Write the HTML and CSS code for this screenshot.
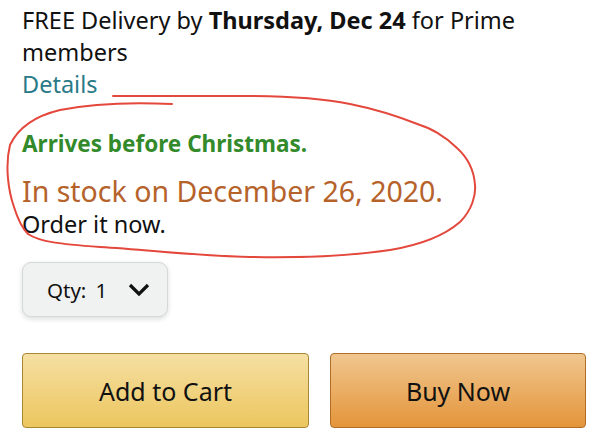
FILE: index.html
```html
<!DOCTYPE html>
<html lang="en">
<head>
  <meta charset="UTF-8">
  <title>Buy Box</title>
  <link rel="stylesheet" href="styles.css">
</head>
<body>
  <div class="buybox">
    <p class="delivery">FREE Delivery by <b>Thursday, Dec 24</b> for Prime<br>members</p>
    <a class="details" href="#">Details</a>

    <p class="arrives">Arrives before Christmas.</p>
    <p class="stock">In stock on December 26, 2020.</p>
    <p class="order">Order it now.</p>

    <div class="qty">
      <span>Qty:</span>
      <span class="qty-value">1</span>
      <svg class="chevron" width="22" height="14" viewBox="0 0 22 14">
        <polyline points="2,2 11,11 20,2" fill="none" stroke="#111" stroke-width="3.2"/>
      </svg>
    </div>

    <div class="actions">
      <button class="btn cart">Add to Cart</button>
      <button class="btn buy">Buy Now</button>
    </div>

    <!-- hand drawn marker circle -->
    <svg class="scribble" width="610" height="447" viewBox="0 0 610 447">
      <path d="M172 104 C 130 102 90 104 60 110 C 35 116 18 128 10 145 C 5 165 8 190 14 207 C 18 220 22 228 28 234 C 40 242 60 244 100 247 C 150 250 200 256 250 257 C 300 258 350 256 390 250 C 420 245 445 235 460 222 C 472 210 476 195 475 185 C 474 170 468 158 457 148 C 445 136 430 128 420 125 C 400 117 380 110 350 104 C 320 98 290 96 240 96 L 113 96"
        fill="none" stroke="#e4473b" stroke-width="2" stroke-linecap="round"/>
    </svg>
  </div>
</body>
</html>
```

FILE: styles.css
```css
body {
  margin: 0;
  background: #ffffff;
  font-family: "Noto Sans", Arial, sans-serif;
  color: #111111;
}

.buybox {
  position: relative;
  padding: 4px 24px 20px 22px;
}

p {
  margin: 0;
}

.delivery {
  font-size: 23.5px;
  line-height: 32px;
}

.details {
  display: block;
  font-size: 23.5px;
  line-height: 32px;
  color: #2a7a88;
  text-decoration: none;
}

.arrives {
  margin-top: 30px;
  font-size: 22.5px;
  line-height: 28px;
  font-weight: bold;
  color: #338a2a;
}

.stock {
  margin-top: 16px;
  font-size: 28.5px;
  line-height: 34px;
  color: #b5622b;
}

.order {
  margin-top: 1px;
  font-size: 23.5px;
  line-height: 30px;
}

.qty {
  margin-top: 23px;
  width: 146px;
  height: 55px;
  box-sizing: border-box;
  display: flex;
  align-items: center;
  gap: 9px;
  padding-left: 24px;
  font-size: 20.5px;
  background: #f0f2f2;
  border: 1px solid #d5d9d9;
  border-radius: 9px;
  box-shadow: 0 2px 5px rgba(15, 17, 17, 0.15);
}

.qty .chevron {
  margin-left: 12px;
}

.actions {
  margin-top: 36px;
  display: grid;
  grid-template-columns: 287px 1fr;
  gap: 21px;
}

.btn {
  height: 75px;
  font-family: "Noto Sans", Arial, sans-serif;
  font-size: 25px;
  color: #111111;
  border-radius: 4px;
  cursor: pointer;
}

.cart {
  background: linear-gradient(#f5dfa3, #ecc65e);
  border: 1px solid #a88734;
}

.buy {
  background: linear-gradient(#f0c68f, #e4953a);
  border: 1px solid #b06d27;
}

.scribble {
  position: absolute;
  top: 0;
  left: 0;
  pointer-events: none;
}
```
